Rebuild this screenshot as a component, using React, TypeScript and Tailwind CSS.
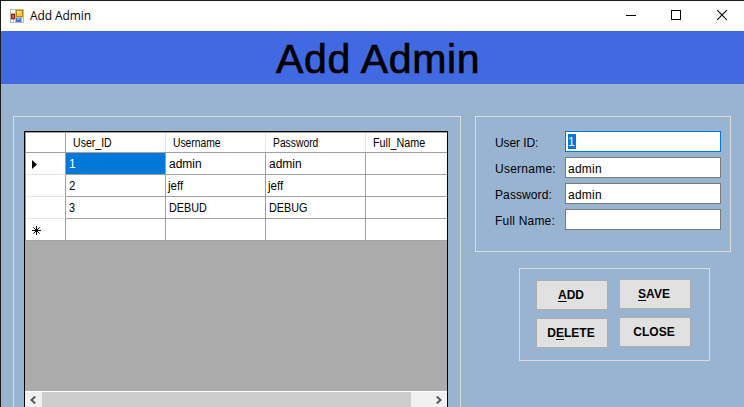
import React from "react";

const columns = [
  { name: "User_ID", scale: "scale-x-[0.88]" },
  { name: "Username", scale: "scale-x-[0.86]" },
  { name: "Password", scale: "scale-x-[0.86]" },
  { name: "Full_Name", scale: "scale-x-[0.9]" },
];

const rows = [
  ["1", "admin", "admin", ""],
  ["2", "jeff", "jeff", ""],
  ["3", "DEBUD", "DEBUG", ""],
  ["", "", "", ""],
];

const rowScale = ["scale-x-100", "scale-x-[0.96]", "scale-x-[0.9]", "scale-x-100"];

const fields = [
  { label: "User ID:", value: "1", focused: true, tracking: "tracking-[-0.1px]" },
  { label: "Username:", value: "admin", focused: false, tracking: "tracking-[0.25px]" },
  { label: "Password:", value: "admin", focused: false, tracking: "tracking-[0.1px]" },
  { label: "Full Name:", value: "", focused: false, tracking: "tracking-[0.2px]" },
];

function FormIcon() {
  return (
    <svg width="14" height="14" viewBox="0 0 14 14" shapeRendering="crispEdges">
      <rect width="14" height="14" fill="#b9b9b9" />
      <rect x="1" y="1" width="4" height="3" fill="#fff" />
      <rect x="1" y="11" width="2" height="2" fill="#fff" />
      <rect x="4" y="11" width="1" height="2" fill="#fff" />
      <rect x="12" y="9" width="1" height="4" fill="#fff" />
      <rect x="1" y="5" width="4" height="5" fill="#8f1c18" />
      <rect x="2" y="6" width="2" height="3" fill="#d9604e" />
      <rect x="6" y="1" width="7" height="7" fill="#b8860b" />
      <rect x="7" y="2" width="5" height="5" fill="#ffcb3d" />
      <rect x="7" y="2" width="3" height="2" fill="#ffe493" />
      <rect x="6" y="9" width="5" height="4" fill="#3b78d8" />
      <rect x="7" y="9" width="3" height="2" fill="#79aef2" />
    </svg>
  );
}

function TitleBar() {
  return (
    <div className="flex h-[30px] shrink-0 items-center bg-white pl-[9px]">
      <FormIcon />
      <span className="ml-[6px] font-['Open_Sans','Noto_Sans',sans-serif] text-[12px] leading-[16px] tracking-[-0.1px]">
        Add Admin
      </span>
      <svg className="-mt-[2px] mr-[16px] ml-auto" width="102" height="12" viewBox="0 0 102 12" fill="none" stroke="#000">
        <path d="M0 6.5H10" />
        <rect x="45.5" y="1.5" width="9" height="9" />
        <path d="M91.2 1.2L100.8 10.8M100.8 1.2L91.2 10.8" strokeWidth="1.1" />
      </svg>
    </div>
  );
}

function RowMarker({ index }: { index: number }) {
  if (index === 0)
    return (
      <svg width="5" height="9" viewBox="0 0 5 9" className="mt-[2px] ml-[6px]">
        <path d="M0 0L5 4.5L0 9Z" fill="#000" />
      </svg>
    );
  if (index === 3)
    return (
      <svg width="9" height="9" viewBox="0 0 9 9" className="mt-[2px] ml-[6px]" stroke="#000">
        <path d="M0 4.5H9M4.5 0V9M1.3 1.3L7.7 7.7M7.7 1.3L1.3 7.7" />
      </svg>
    );
  return null;
}

function DataGrid() {
  return (
    <div className="flex h-[290px] w-[424px] flex-col overflow-hidden border border-black bg-[#ababab] text-[12px] leading-[14px]">
      <div className="flex h-[21px] shrink-0 border-t border-b border-l border-[#a0a0a0] bg-white">
        <div className="w-[40px] shrink-0 border-r border-[#a0a0a0]" />
        {columns.map((c) => (
          <div key={c.name} className="flex w-[100px] shrink-0 items-center border-r border-[#e5e5e5] pl-[7px]">
            <span className={`origin-left ${c.scale}`}>{c.name}</span>
          </div>
        ))}
      </div>
      {rows.map((row, r) => (
        <div key={r} className="flex h-[22px] shrink-0 border-l border-[#a0a0a0] bg-white">
          <div
            className={`flex w-[40px] shrink-0 items-center border-r border-b border-r-[#a0a0a0] ${r === 3 ? "border-b-[#a0a0a0]" : "border-b-[#e5e5e5]"}`}
          >
            <RowMarker index={r} />
          </div>
          {row.map((cell, c) => (
            <div
              key={c}
              className={`flex w-[100px] shrink-0 items-center border-r border-b border-[#a0a0a0] ${r === 0 && c === 0 ? "bg-[#0078d7] text-white" : ""} ${cell === "jeff" ? "pl-[2px]" : "pl-[3px]"}`}
            >
              <span className={`origin-left ${rowScale[r]}`}>{cell}</span>
            </div>
          ))}
        </div>
      ))}
      <div className="mt-[150px] flex h-[18px] shrink-0 border-t border-white bg-[#f0f0f0]">
        <div className="flex w-[17px] items-center pl-[5px]">
          <svg width="6" height="8" viewBox="0 0 6 8" fill="none" stroke="#555" strokeWidth="1.9" className="-mt-[2px]">
            <path d="M5.2 0.5L1.5 4L5.2 7.5" />
          </svg>
        </div>
        <div className="w-[369px] bg-[#cdcdcd]" />
        <div className="flex flex-1 items-center justify-end pr-[5px]">
          <svg width="6" height="8" viewBox="0 0 6 8" fill="none" stroke="#555" strokeWidth="1.9" className="-mt-[2px]">
            <path d="M0.8 0.5L4.5 4L0.8 7.5" />
          </svg>
        </div>
      </div>
    </div>
  );
}

function ActionButton({ children }: { children: React.ReactNode }) {
  return (
    <button className="flex h-[30px] w-[72px] items-center justify-center border border-[#adadad] bg-[#e1e1e1] pr-[2px] text-[12px] leading-[14px] font-bold">
      <span>{children}</span>
    </button>
  );
}

function Key({ children }: { children: string }) {
  return <span className="underline decoration-1 underline-offset-2">{children}</span>;
}

export default function App() {
  return (
    <div className="flex h-[407px] w-[744px] flex-col overflow-hidden border-t border-l border-[#1b1b1b] bg-[#99b4d1] font-['Liberation_Sans',Arial,sans-serif] text-black">
      <TitleBar />
      <h1 className="h-[53px] shrink-0 bg-[#4169e1] pl-[275px] text-[41px] leading-[57px] tracking-[0.65px] whitespace-nowrap [-webkit-text-stroke:0.7px_#000]">
        Add Admin
      </h1>
      <div className="flex items-start pt-[32px] pl-[12px]">
        <div className="h-[320px] w-[448px] shrink-0 border border-[#dcdcdc] pt-[14px] pl-[10px]">
          <DataGrid />
        </div>
        <div className="ml-[14px] flex flex-col">
          <div className="flex h-[136px] w-[256px] flex-col gap-[5px] border border-[#dcdcdc] pt-[14px] pl-[19px]">
            {fields.map((f) => (
              <label key={f.label} className="flex h-[21px] items-center text-[12px] leading-[14px]">
                <span className={`w-[70px] pt-[3px] ${f.tracking}`}>{f.label}</span>
                <span
                  className={`flex h-[21px] w-[156px] items-center border bg-white pl-[2px] tracking-[0.25px] ${f.focused ? "border-[#0078d7]" : "border-[#7a7a7a]"}`}
                >
                  <span className={f.focused ? "h-[15px] w-[8px] bg-[#0078d7] leading-[17px] text-white" : "pt-[3px]"}>
                    {f.value}
                  </span>
                </span>
              </label>
            ))}
          </div>
          <div className="mt-[16px] ml-[44px] flex h-[93px] w-[191px] gap-[11px] border border-[#dcdcdc] pl-[16px]">
            <div className="flex flex-col gap-[8px] pt-[11px]">
              <ActionButton>
                <Key>A</Key>DD
              </ActionButton>
              <ActionButton>
                D<Key>E</Key>LETE
              </ActionButton>
            </div>
            <div className="flex flex-col gap-[8px] pt-[10px]">
              <ActionButton>
                <Key>S</Key>AVE
              </ActionButton>
              <ActionButton>CLOSE</ActionButton>
            </div>
          </div>
        </div>
      </div>
    </div>
  );
}
